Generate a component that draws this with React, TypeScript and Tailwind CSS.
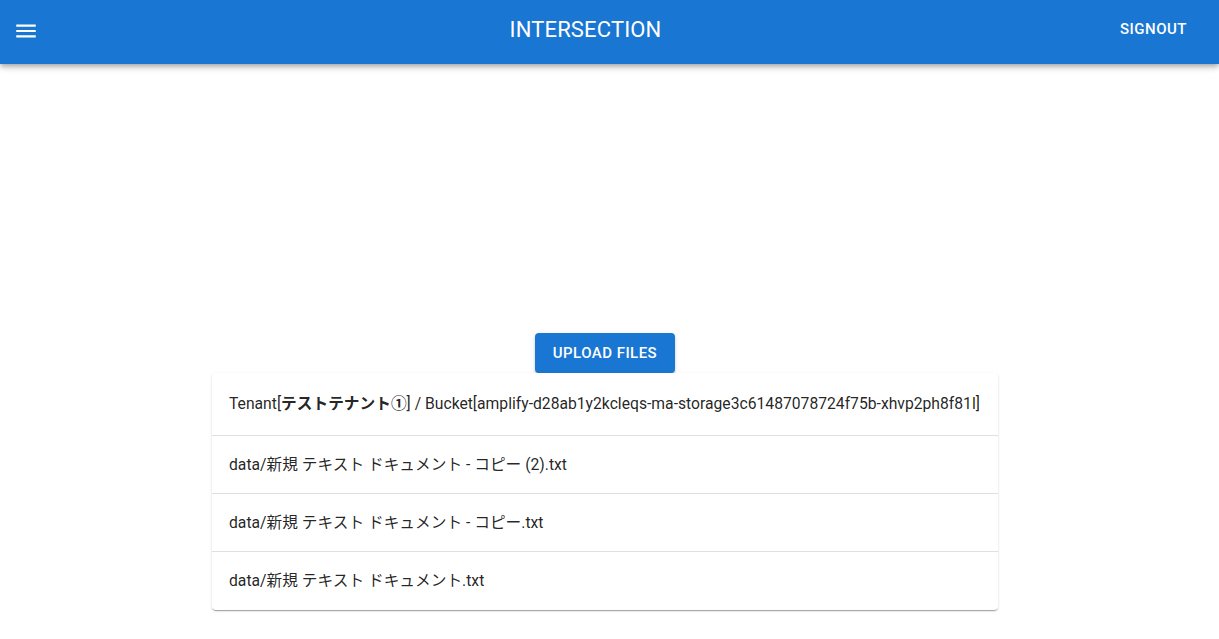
import React from "react";

const rows = [
  "data/新規 テキスト ドキュメント - コピー (2).txt",
  "data/新規 テキスト ドキュメント - コピー.txt",
  "data/新規 テキスト ドキュメント.txt",
];

export default function App() {
  return (
    <div
      className="min-h-screen bg-white text-[rgba(0,0,0,0.87)]"
      style={{ fontFamily: 'Roboto, "Noto Sans CJK JP", sans-serif' }}
    >
      <header className="h-16 bg-[#1976d2] text-white flex items-center pl-[13px] pr-6 pb-[5px] shadow-[0_2px_4px_-1px_rgba(0,0,0,0.2),0_4px_5px_0_rgba(0,0,0,0.14),0_1px_10px_0_rgba(0,0,0,0.12)] relative z-10">
        <div className="w-[48px] flex items-center pt-[2px]">
          <svg width="26" height="26" viewBox="0 0 24 24" fill="white">
            <path d="M3 18h18v-2H3v2zm0-5h18v-2H3v2zm0-7v2h18V6H3z" />
          </svg>
        </div>
        <div className="flex-1 text-center text-[22px] font-normal tracking-[0.15px] pr-[2px]">
          INTERSECTION
        </div>
        <button className="px-2 h-9 text-[15px] font-medium tracking-[0.5px] uppercase">
          SIGNOUT
        </button>
      </header>
      <main className="flex flex-col items-center pt-[269px] pr-[9px]">
        <button className="h-10 px-[18px] rounded bg-[#1976d2] text-white text-[15px] font-medium tracking-[0.46px] shadow-[0_3px_1px_-2px_rgba(0,0,0,0.2),0_2px_2px_0_rgba(0,0,0,0.14),0_1px_5px_0_rgba(0,0,0,0.12)]">
          UPLOAD FILES
        </button>
        <div className="w-[786px] bg-white rounded shadow-[0_2px_1px_-1px_rgba(0,0,0,0.2),0_1px_1px_0_rgba(0,0,0,0.14),0_1px_3px_0_rgba(0,0,0,0.12)]">
          <div className="h-[63px] flex items-center px-[17px] border-b border-[#e0e0e0] text-[15.7px] whitespace-nowrap">
            <span>
              Tenant[<span className="font-bold">テストテナント①</span>] / Bucket[amplify-d28ab1y2kcleqs-ma-storage3c61487078724f75b-xhvp2ph8f81l]
            </span>
          </div>
          {rows.map((r, i) => (
            <div
              key={r}
              className={`h-[58px] flex items-center px-[17px] text-[15.7px] whitespace-nowrap ${i < rows.length - 1 ? "border-b border-[#e0e0e0]" : ""}`}
            >
              {r}
            </div>
          ))}
        </div>
      </main>
    </div>
  );
}
